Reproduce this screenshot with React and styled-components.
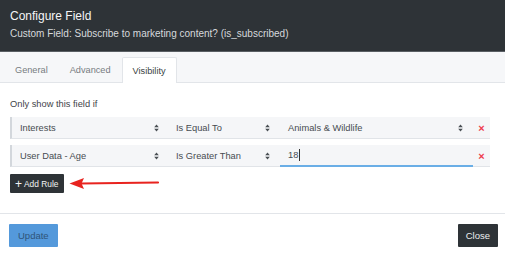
import React from 'react'
import styled, { createGlobalStyle } from 'styled-components'

const GlobalStyle = createGlobalStyle`
    body {
        margin: 0;
        background: #ffffff;
        font-family: "Liberation Sans", Arial, sans-serif;
    }
`

const Modal = styled.div`
    width: 505px;
    height: 254px;
    display: flex;
    flex-direction: column;
    background: #ffffff;
    overflow: hidden;
`

const Header = styled.div`
    background: #2e3337;
    height: 52px;
    box-sizing: border-box;
    padding: 9px 10px 0;
    border-bottom: 1px solid #5a5f64;
`

const Title = styled.div`
    color: #f4f5f6;
    font-size: 12px;
    line-height: 15px;
`

const Subtitle = styled.div`
    color: #d6d9dc;
    font-size: 10px;
    line-height: 16px;
    margin-top: 2px;
`

const TabBar = styled.div`
    background: #f6f7f9;
    height: 31px;
    box-sizing: border-box;
    border-bottom: 1px solid #e2e5e9;
    display: flex;
    align-items: flex-end;
    padding-left: 4px;
`

const Tab = styled.div`
    height: ${p => (p.$active ? '26px' : '25px')};
    margin-bottom: ${p => (p.$active ? '-1px' : '0')};
    box-sizing: border-box;
    padding: 0 10px;
    display: flex;
    align-items: center;
    font-size: 9.2px;
    color: ${p => (p.$active ? '#3a3f44' : '#767b80')};
    background: ${p => (p.$active ? '#ffffff' : 'transparent')};
    border: 1px solid ${p => (p.$active ? '#e2e5e9' : 'transparent')};
    border-bottom: none;
    border-radius: 2px 2px 0 0;
`

const Body = styled.div`
    flex: 1;
    padding: 15px 10px 0;
    border-bottom: 1px solid #e2e5e9;
`

const Hint = styled.div`
    font-size: 9.3px;
    color: #3f4449;
    line-height: 12px;
    margin-bottom: 7px;
`

const Rules = styled.div`
    display: flex;
    flex-direction: column;
    gap: 6px;
    width: 480px;
`

const RuleRow = styled.div`
    display: grid;
    grid-template-columns: 158px 110px 193px 17px;
    height: 22px;
    background: #f5f6f8;
    border-left: 2px solid #d3d7dc;
    border-bottom: 1px solid #e1e4e8;
    box-sizing: border-box;
`

const Select = styled.div`
    display: flex;
    align-items: center;
    justify-content: space-between;
    padding: 0 ${p => p.$pr || 10}px 0 ${p => p.$pad || 6}px;
    font-size: 9.3px;
    color: #474c51;
`

const ValueInput = styled.div`
    display: flex;
    align-items: center;
    padding-left: 8px;
    font-size: 9.3px;
    color: #474c51;
    border-bottom: 2px solid #6aaee6;
    margin-bottom: -1px;
`

const Caret = styled.span`
    display: inline-block;
    width: 1px;
    height: 12px;
    background: #333;
    margin-left: 1px;
`

const Remove = styled.div`
    display: flex;
    align-items: center;
    justify-content: center;
    color: #ee3b4c;
    font-size: 11px;
    font-weight: bold;
`

const ActionLine = styled.div`
    display: flex;
    align-items: center;
    margin-top: 7px;
`

const AddButton = styled.div`
    background: #2e3337;
    color: #f2f3f4;
    font-size: 8.4px;
    height: 19px;
    padding: 0 6px 0 5px;
    display: flex;
    align-items: center;
    gap: 2px;
    border-radius: 1px;
`

const Footer = styled.div`
    height: 40px;
    box-sizing: border-box;
    display: flex;
    align-items: flex-start;
    justify-content: space-between;
    padding: 10px 7px 0 9px;
`

const Button = styled.div`
    height: 23px;
    padding: 0 ${p => p.$px || 8}px;
    display: flex;
    align-items: center;
    font-size: 9.5px;
    border-radius: 1px;
    background: ${p => (p.$primary ? '#5499db' : '#2e3337')};
    color: ${p => (p.$primary ? '#2f5479' : '#eceeef')};
`

const Arrows = () => (
    <svg width="5" height="8" viewBox="0 0 5 8">
        <path d="M2.5 0.5 L4.8 3.2 H0.2 Z M2.5 7.5 L4.8 4.8 H0.2 Z" fill="#4a4f54" />
    </svg>
)

const rules = [
    { field: 'Interests', op: 'Is Equal To', value: 'Animals & Wildlife', select: true },
    { field: 'User Data - Age', op: 'Is Greater Than', value: '18', select: false },
]

const App = () => (
    <>
        <GlobalStyle />
        <Modal>
            <Header>
                <Title>Configure Field</Title>
                <Subtitle>Custom Field: Subscribe to marketing content? (is_subscribed)</Subtitle>
            </Header>
            <TabBar>
                <Tab>General</Tab>
                <Tab>Advanced</Tab>
                <Tab $active>Visibility</Tab>
            </TabBar>
            <Body>
                <Hint>Only show this field if</Hint>
                <Rules>
                    {rules.map(r => (
                        <RuleRow key={r.field}>
                            <Select $pad={8} $pr={11}>{r.field}<Arrows /></Select>
                            <Select>{r.op}<Arrows /></Select>
                            {r.select ? (
                                <Select $pad={8}>{r.value}<Arrows /></Select>
                            ) : (
                                <ValueInput>{r.value}<Caret /></ValueInput>
                            )}
                            <Remove>×</Remove>
                        </RuleRow>
                    ))}
                </Rules>
                <ActionLine>
                    <AddButton><span style={{ fontSize: 12, lineHeight: '10px' }}>+</span>Add Rule</AddButton>
                    <svg width="92" height="13" viewBox="0 0 92 13" style={{ marginLeft: 5 }}>
                        <line x1="12" y1="6.5" x2="89" y2="5.5" stroke="#e8231f" strokeWidth="2.2" strokeLinecap="round" />
                        <path d="M0.5 6.5 L15 1 L12.5 6.5 L15 12 Z" fill="#e8231f" />
                    </svg>
                </ActionLine>
            </Body>
            <Footer>
                <Button $primary $px={9}>Update</Button>
                <Button $px={8}>Close</Button>
            </Footer>
        </Modal>
    </>
)

export default App
